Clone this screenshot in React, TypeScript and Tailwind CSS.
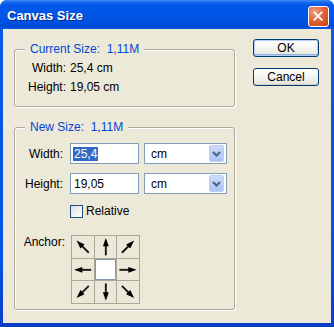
import React from "react";

const font = { fontFamily: '"Liberation Sans", Arial, sans-serif' };

function Arrow({ rot }: { rot: number }) {
  return (
    <svg viewBox="0 0 22 22" className="w-full h-full">
      <g transform={`rotate(${rot} 11 11)`}>
        <line x1="11" y1="19.5" x2="11" y2="8" stroke="#7a7a7a" strokeWidth="2.2" />
        <line x1="11" y1="19.5" x2="11" y2="8" stroke="#000" strokeWidth="1.3" />
        <polygon points="11,2 8,10.5 14,10.5" fill="#000" />
      </g>
    </svg>
  );
}

function Chevron() {
  return (
    <svg viewBox="0 0 9 6" className="w-[9px] h-[6px]">
      <polyline points="1,1 4.5,4.5 8,1" fill="none" stroke="#4d6185" strokeWidth="2" />
    </svg>
  );
}

function Select() {
  return (
    <div className="w-[83px] h-[21px] border border-[#7f9db9] bg-white flex items-center pl-[6px] pr-[2px]">
      <span className="flex-1 text-[12px] leading-[14px] text-black">cm</span>
      <div className="w-[15px] h-[17px] rounded-[2px] border border-[#bccdf5] bg-[linear-gradient(180deg,#cddbfb_0%,#b9ccf6_60%,#adc2f3_100%)] flex items-center justify-center">
        <Chevron />
      </div>
    </div>
  );
}

export default function App() {
  const cells = [
    { rot: -45 },
    { rot: 0 },
    { rot: 45 },
    { rot: -90 },
    { rot: null },
    { rot: 90 },
    { rot: -135 },
    { rot: 180 },
    { rot: 135 },
  ];
  return (
    <div style={font} className="w-[334px] h-[327px] flex flex-col rounded-t-[7px] overflow-hidden bg-[linear-gradient(180deg,#0a5ae8_0%,#0052e2_80%,#0a3fc4_100%)]">
      {/* Title bar */}
      <div className="h-[29px] shrink-0 flex items-center pt-[3px] pl-[7px] pr-[5px] bg-[linear-gradient(180deg,#3d8ff7_0px,#1a6cf0_2px,#0058ea_5px,#0055e5_15px,#0050e0_23px,#0047d6_26px,#0a58e0_29px)]">
        <span className="text-white font-bold text-[13px] leading-[16px] [text-shadow:1px_1px_0_#0b2a8c]">
          Canvas Size
        </span>
        <div className="ml-auto w-[21px] h-[21px] rounded-[3px] border border-white bg-[radial-gradient(circle_at_30%_25%,#f0a080_0%,#e2643a_45%,#c83f14_100%)] flex items-center justify-center">
          <svg viewBox="0 0 21 21" className="w-[21px] h-[21px]">
            <line x1="6" y1="6" x2="14" y2="14" stroke="#fff" strokeWidth="2" strokeLinecap="square" />
            <line x1="14" y1="6" x2="6" y2="14" stroke="#fff" strokeWidth="2" strokeLinecap="square" />
          </svg>
        </div>
      </div>

      {/* Body */}
      <div className="flex-1 mx-[3px] mb-[4px] bg-[#ece9d8] flex text-[12px] text-black">
        <div className="ml-[11px] mt-[20px] w-[221px] flex flex-col gap-[20px]">
          {/* Current size */}
          <div className="relative h-[58px] border border-[#aca899] rounded-[3px] shadow-[1px_1px_0_#fff,inset_1px_1px_0_#fff] pt-[9px]">
            <div className="absolute left-[10px] top-[-8px] px-[5px] bg-[#ece9d8] text-[#0046d5] leading-[14px] whitespace-pre">
              Current Size:  1,11M
            </div>
            <div className="grid grid-cols-[51px_auto] gap-x-[4px] leading-[19px]">
              <span className="text-right">Width:</span>
              <span>25,4 cm</span>
              <span className="text-right">Height:</span>
              <span>19,05 cm</span>
            </div>
          </div>

          {/* New size */}
          <div className="relative h-[183px] border border-[#aca899] rounded-[3px] shadow-[1px_1px_0_#fff,inset_1px_1px_0_#fff] pt-[15px]">
            <div className="absolute left-[10px] top-[-8px] px-[5px] bg-[#ece9d8] text-[#0046d5] leading-[14px] whitespace-pre">
              New Size:  1,11M
            </div>
            <div className="flex flex-col gap-[9px]">
              <div className="flex items-center">
                <span className="w-[48px] text-right">Width:</span>
                <div className="ml-[7px] w-[69px] h-[21px] border border-[#7f9db9] bg-white flex items-center pl-[2px]">
                  <span className="bg-[#316ac5] text-white leading-[14px] px-px">25,4</span>
                </div>
                <div className="ml-[5px]">
                  <Select />
                </div>
              </div>
              <div className="flex items-center">
                <span className="w-[48px] text-right">Height:</span>
                <div className="ml-[7px] w-[69px] h-[21px] border border-[#7f9db9] bg-white flex items-center pl-[3px]">
                  <span className="leading-[14px]">19,05</span>
                </div>
                <div className="ml-[5px]">
                  <Select />
                </div>
              </div>
            </div>
            <div className="mt-[10px] ml-[55px] flex items-center">
              <div className="w-[13px] h-[13px] border border-[#1c5180] bg-[linear-gradient(135deg,#dcdcd7_0%,#f2f2ef_60%,#ffffff_100%)]" />
              <span className="ml-[3px] leading-[14px]">Relative</span>
            </div>
            <div className="mt-[17px] flex items-start">
              <span className="w-[50px] text-right leading-[14px]">Anchor:</span>
              <div className="ml-[6px] w-[69px] h-[69px] grid grid-cols-3 grid-rows-3 gap-px p-px bg-[#aca899]">
                {cells.map((c, i) =>
                  c.rot === null ? (
                    <div key={i} className="bg-white border border-[#8595ab] rounded-[1px]" />
                  ) : (
                    <div key={i} className="bg-[#ece9d8]">
                      <Arrow rot={c.rot} />
                    </div>
                  )
                )}
              </div>
            </div>
          </div>
        </div>

        {/* Buttons */}
        <div className="ml-[18px] mt-[10px] flex flex-col gap-[11px]">
          <div className="w-[66px] h-[18px] rounded-[3px] border border-[#003c74] bg-[linear-gradient(180deg,#ffffff_0%,#f5f5f1_50%,#e6e4da_100%)] shadow-[inset_0_0_0_1px_#b5cdf4,inset_0_-2px_0_0_#90b2ea] flex items-center justify-center leading-[14px]">
            OK
          </div>
          <div className="w-[66px] h-[18px] rounded-[3px] border border-[#003c74] bg-[linear-gradient(180deg,#ffffff_0%,#f5f5f1_50%,#e3e0d4_100%)] shadow-[inset_0_-1px_0_0_#d6d0c5] flex items-center justify-center leading-[14px]">
            Cancel
          </div>
        </div>
      </div>
    </div>
  );
}
